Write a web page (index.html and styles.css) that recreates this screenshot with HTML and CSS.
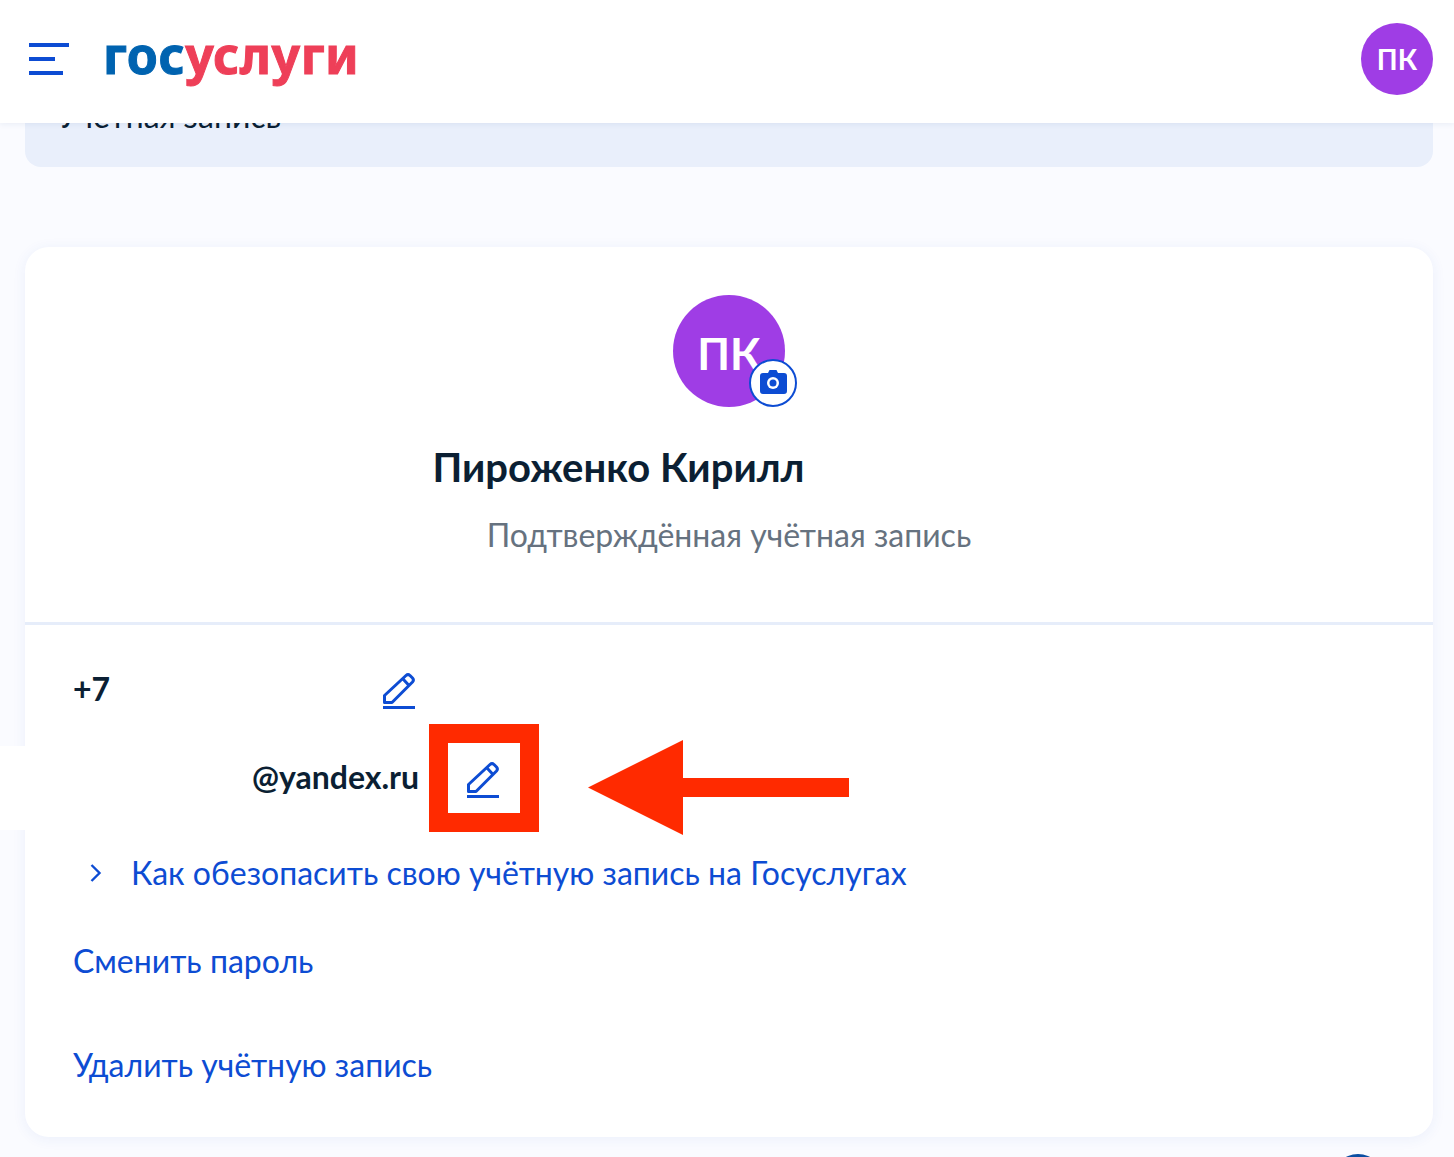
FILE: index.html
```html
<!DOCTYPE html>
<html lang="ru">
  <head>
    <meta charset="utf-8" />
    <title>Госуслуги</title>
    <link rel="stylesheet" href="styles.css">
  </head>
  <body>
    <header class="topbar">
      <div class="burger"><span></span><span></span><span></span></div>
      <div class="logo"><span class="logo-gos">гос</span><span class="logo-usl">услуги</span></div>
      <div class="avatar-small">ПК</div>
    </header>

    <main class="content">
      <div class="banner">Учётная запись</div>

      <section class="card">
        <div class="profile">
          <div class="avatar">
            ПК
            <div class="camera">
              <svg width="28" height="24" viewBox="0 0 28 24">
                <path fill="#0d4cd3" d="M9 3l1.500-3h7l1.500 3h6a3 3 0 0 1 3 3v15a3 3 0 0 1-3 3h-21a3 3 0 0 1-3-3v-15a3 3 0 0 1 3-3z"/>
                <circle cx="14" cy="13" r="6" fill="#fff"/>
                <circle cx="14" cy="13" r="3.500" fill="#0d4cd3"/>
              </svg>
            </div>
          </div>
          <div class="name">Пироженко Кирилл</div>
          <div class="status">Подтверждённая учётная запись</div>
        </div>

        <div class="contacts">
          <div class="row row-phone">
            <span class="value">+7</span>
            <svg class="pencil" width="32" height="36" viewBox="0 0 32 36">
              <path fill="none" stroke="#0d4cd3" stroke-width="3" stroke-linejoin="round" d="M1.500 22.500L23 2.500a3 3 0 0 1 4 0l2.500 2.500a3 3 0 0 1 0 4L9 29.500H1.500zM20 6l6.500 7"/>
              <rect x="0" y="33" width="32" height="3" fill="#0d4cd3"/>
            </svg>
          </div>
          <div class="row row-email">
            <span class="value">@yandex.ru</span>
            <svg class="pencil" width="32" height="36" viewBox="0 0 32 36">
              <path fill="none" stroke="#0d4cd3" stroke-width="3" stroke-linejoin="round" d="M1.500 22.500L23 2.500a3 3 0 0 1 4 0l2.500 2.500a3 3 0 0 1 0 4L9 29.500H1.500zM20 6l6.500 7"/>
              <rect x="0" y="33" width="32" height="3" fill="#0d4cd3"/>
            </svg>
          </div>
        </div>

        <a class="link link-secure">
          <svg width="12" height="20" viewBox="0 0 12 20">
            <path fill="none" stroke="#0d4cd3" stroke-width="2.400" d="M1.500 2l8 8-8 8"/>
          </svg>
          Как обезопасить свою учётную запись на Госуслугах
        </a>
        <a class="link link-password">Сменить пароль</a>
        <a class="link link-delete">Удалить учётную запись</a>
      </section>
    </main>

    <!-- annotation drawn over the page -->
    <div class="mark-box"></div>
    <svg class="mark-arrow" width="261" height="95" viewBox="0 0 261 95">
      <path fill="#ff2a00" d="M0 47.500L95 0V38H261V57H95V95z"/>
    </svg>
    <div class="peek"></div>
  </body>
</html>
```

FILE: styles.css
```css
html {
  height: 1157px;
  overflow: hidden;
}
body {
  margin: 0;
  height: 1157px;
  overflow: hidden;
  position: relative;
  background-color: #fafbff;
  font-family: "Lato", "Noto Sans", sans-serif;
  color: #0b1f33;
}

.topbar {
  position: relative;
  z-index: 2;
  display: flex;
  align-items: center;
  height: 123px;
  box-sizing: border-box;
  padding: 0 21px 5px 29px;
  background-color: #fff;
  box-shadow: 0 1px 6px rgba(30, 60, 130, 0.08);
}
.burger {
  display: flex;
  flex-direction: column;
  gap: 10px;
  width: 40px;
}
.burger span {
  display: block;
  height: 4px;
  background-color: #0d4cd3;
}
.burger span:nth-child(2) {
  width: 26px;
}
.burger span:nth-child(3) {
  width: 34px;
}
.logo {
  margin-left: 34px;
  margin-top: -9px;
  font-family: "Noto Sans", sans-serif;
  font-weight: 700;
  font-size: 50px;
  line-height: 60px;
  letter-spacing: 0.6px;
  -webkit-text-stroke: 1px currentColor;
}
.logo-gos {
  color: #0063b0;
}
.logo-usl {
  color: #ee3f58;
}
.avatar-small {
  display: flex;
  align-items: center;
  justify-content: center;
  width: 72px;
  height: 72px;
  margin-left: auto;
  border-radius: 50%;
  background-color: #9f3de5;
  color: #fff;
  font-size: 28px;
  font-weight: 700;
}

.content {
  padding: 0 21px 0 25px;
}
.banner {
  height: 100px;
  margin-top: -56px;
  padding: 29px 33px 0;
  border-radius: 0 0 16px 16px;
  background-color: #e9effb;
  font-size: 32px;
  line-height: 40px;
  box-sizing: border-box;
}

.card {
  height: 890px;
  margin-top: 80px;
  box-sizing: border-box;
  border-radius: 24px;
  background-color: #fff;
  box-shadow: 0 2px 14px rgba(40, 80, 200, 0.07);
}
.profile {
  display: flex;
  flex-direction: column;
  align-items: center;
  height: 378px;
  padding-top: 48px;
  box-sizing: border-box;
  border-bottom: 3px solid #e6edfa;
}
.avatar {
  position: relative;
  display: flex;
  align-items: center;
  justify-content: center;
  width: 112px;
  height: 112px;
  box-sizing: border-box;
  padding-top: 4px;
  border-radius: 50%;
  background-color: #9f3de5;
  color: #fff;
  font-size: 44px;
  font-weight: 700;
}
.camera {
  position: absolute;
  right: -12px;
  bottom: 0;
  display: flex;
  align-items: center;
  justify-content: center;
  width: 48px;
  height: 48px;
  box-sizing: border-box;
  border: 2px solid #0d4cd3;
  border-radius: 50%;
  background-color: #fff;
  padding-bottom: 2px;
}
.name {
  margin-top: 34px;
  padding-right: 221px;
  font-size: 40px;
  font-weight: 700;
  line-height: 52px;
}
.status {
  margin-top: 20px;
  font-size: 32px;
  line-height: 44px;
  color: #66727f;
}

.contacts {
  padding-top: 44px;
}
.row {
  display: flex;
  align-items: flex-start;
  font-size: 32px;
  font-weight: 700;
  line-height: 40px;
}
.row-phone {
  height: 77px;
  padding-left: 48px;
}
.row-phone .pencil {
  margin-left: 273px;
  margin-top: 4px;
}
.row-email {
  height: 84px;
  box-sizing: border-box;
  margin-left: -25px;
  padding-left: 252px;
  padding-bottom: 22px;
  align-items: center;
  background-color: #fff;
}
.row-email .pencil {
  margin-left: 48px;
  margin-top: 6px;
}

.link {
  display: block;
  font-size: 32px;
  line-height: 44px;
  color: #0d4cd3;
  padding-left: 48px;
}
.link-secure {
  display: flex;
  align-items: center;
  gap: 29px;
  margin-top: 21px;
  padding-left: 65px;
}
.link-password {
  margin-top: 44px;
}
.link-delete {
  margin-top: 60px;
}

.mark-box {
  position: absolute;
  left: 429px;
  top: 724px;
  width: 110px;
  height: 108px;
  box-sizing: border-box;
  border: 19px solid #ff2a00;
}
.mark-arrow {
  position: absolute;
  left: 588px;
  top: 740px;
}
.peek {
  position: absolute;
  left: 1332px;
  top: 1154px;
  width: 52px;
  height: 52px;
  border-radius: 50%;
  background-color: #0b4ea2;
}
```
